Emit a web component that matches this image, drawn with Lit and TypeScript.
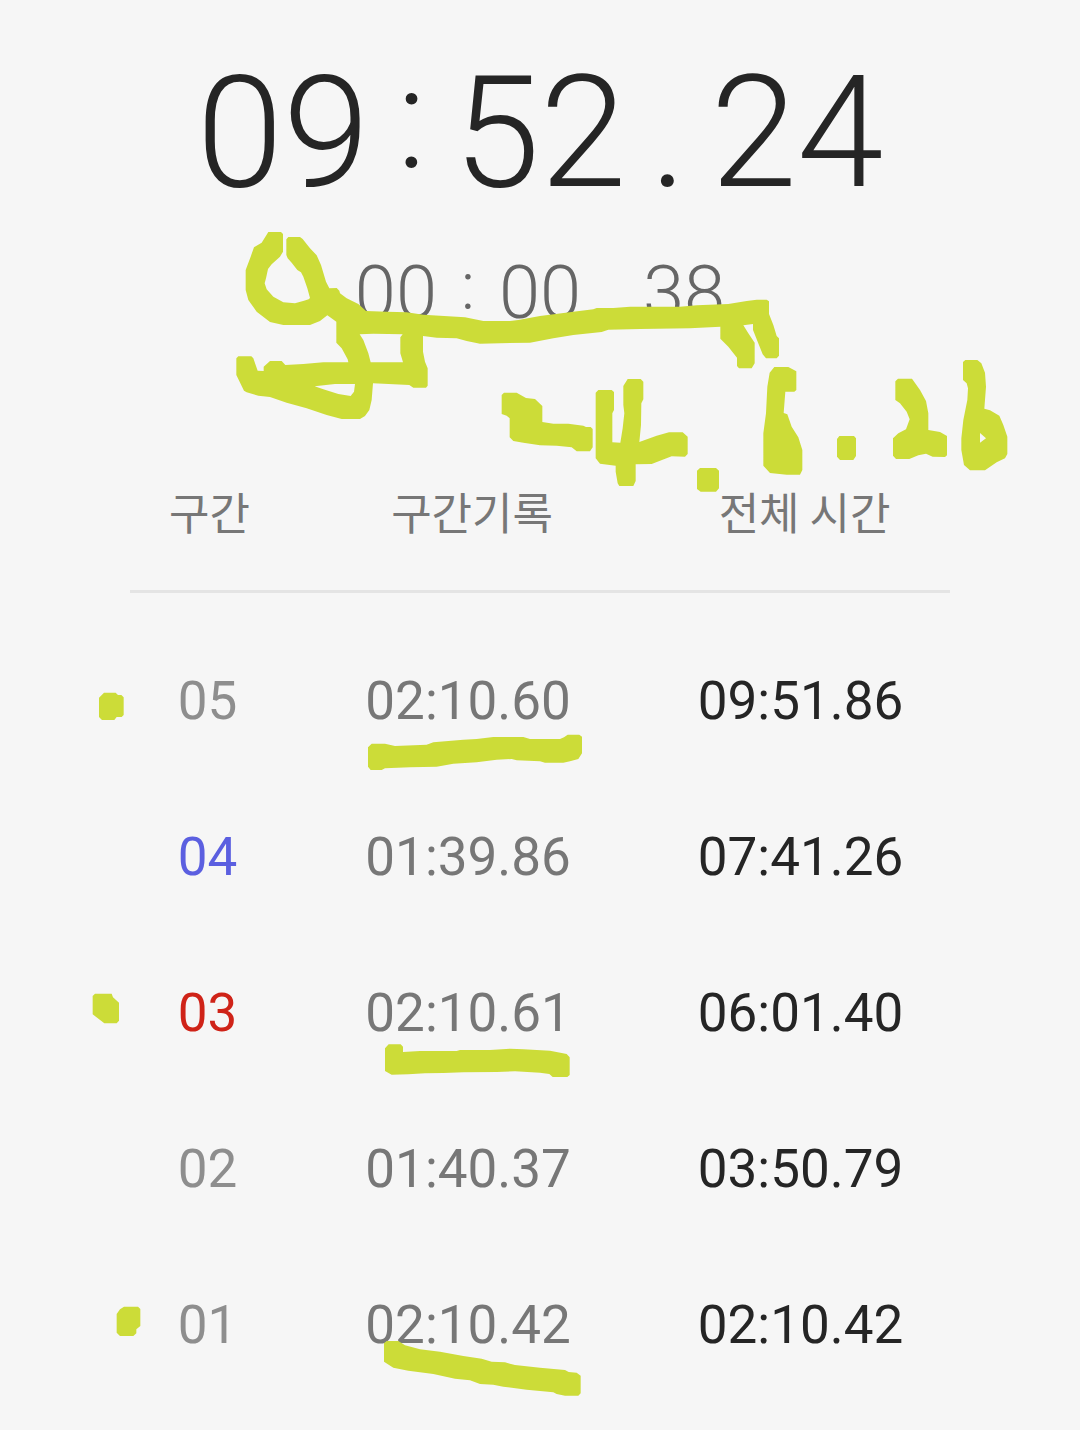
import { LitElement, html, svg, css } from "lit";
import { customElement } from "lit/decorators.js";

interface Lap {
  no: string;
  lap: string;
  total: string;
  tone: "" | "fastest" | "slowest";
}

interface Mark {
  x: number;
  y: number;
  d: string;
}

const LAPS: Lap[] = [
  { no: "05", lap: "02:10.60", total: "09:51.86", tone: "" },
  { no: "04", lap: "01:39.86", total: "07:41.26", tone: "fastest" },
  { no: "03", lap: "02:10.61", total: "06:01.40", tone: "slowest" },
  { no: "02", lap: "01:40.37", total: "03:50.79", tone: "" },
  { no: "01", lap: "02:10.42", total: "02:10.42", tone: "" },
];

// Highlighter strokes. Each outline is drawn at three times its final size from its own origin.
const MARKS: Mark[] = [
  {
    x: 220,
    y: 220,
    d: `M145 36 183 36 189 42 189 95 180 110 155 133 144 147 138 175 134 190 140 208 160 230 190 247 225 250 252 242
      266 238 270 234 262 205 250 170 243 157 232 150 215 128 203 115 199 105 199 58 205 51 240 51 248 57 270 85 290 106
      303 135 318 185 328 205 350 204 358 212 360 220 380 235 415 252 438 273 500 275 560 277 610 284 735 292 790 303
      870 303 895 300 960 288 1060 275 1120 268 1130 264 1180 264 1230 260 1380 260 1430 256 1525 252 1580 243 1610 239
      1640 239 1647 244 1647 282 1660 315 1670 348 1677 355 1677 407 1670 415 1638 415 1628 403 1613 365 1599 330
      1599 312 1570 316 1585 340 1604 368 1604 430 1595 445 1557 445 1551 438 1551 413 1525 380 1501 356 1501 320
      1410 325 1260 327 1165 329 1145 336 1060 345 1000 355 930 368 780 371 740 363 710 355 650 353 609 348 609 395
      615 425 623 445 623 497 618 503 580 503 568 495 459 490 455 540 448 570 435 588 420 597 365 597 320 585 260 565
      200 548 150 531 115 527 80 517 72 512 49 465 49 415 55 409 94 409 100 415 113 452 131 453 131 440 150 423 185 423
      196 435 250 432 310 427 385 427 383 418 365 385 349 368 349 305 322 286 300 303 270 315 190 315 150 306 110 275
      85 240 77 210 77 150 92 110 102 82 125 68Z
      M419 343 460 341 548 343 541 352 541 400 549 427 452 427 445 400 430 360Z
      M284 499 345 492 405 492 402 515 392 528 355 522 310 508Z`,
  },
  {
    x: 480,
    y: 350,
    d: `M72 128 110 128 138 144 165 147 187 168 187 216 220 221 265 221 310 227 318 231 332 231 338 237 338 292 330 304
      290 304 275 292 230 287 180 286 130 278 100 273 89 262 89 205 80 197 65 192 65 135Z
      M355 120 395 120 402 126 402 180 397 190 397 277 421 278 428 235 433 190 430 165 430 108 443 87 482 87 490 95
      490 148 484 160 483 225 478 276 530 257 567 247 608 247 623 260 623 312 615 320 575 319 515 342 467 343 467 393
      460 408 418 408 413 400 407 365 407 347 360 341 347 325 347 128Z
      M660 354 708 354 717 362 717 415 708 425 662 425 651 417 651 362Z`,
  },
  {
    x: 740,
    y: 350,
    d: `M103 51 145 51 169 64 169 120 163 125 136 125 131 189 142 193 155 230 175 262 187 300 187 360 180 374 140 374
      90 369 70 347 70 250 78 190 82 110 89 68Z
      M298 258 342 258 348 265 348 318 340 330 300 330 291 320 291 267Z
      M474 86 516 86 540 120 558 153 565 190 565 240 600 246 621 258 621 316 615 321 578 320 558 311 535 316 508 327
      468 327 459 317 459 265 475 250 498 238 509 208 500 185 480 160 466 150 466 94Z
      M676 30 712 30 724 40 735 68 738 110 733 176 750 181 778 197 790 225 802 260 802 312 795 325 770 337 735 361
      690 361 672 345 664 300 664 265 670 210 682 150 684 115 680 100 669 90 669 36Z
      M720 249 738 265 720 278Z`,
  },
  {
    x: 80,
    y: 660,
    d: `M72 98 107 98 114 105 124 105 131 112 131 165 125 171 110 171 103 180 66 180 57 171 57 113Z
      M875 251 915 251 945 258 1040 254 1060 247 1150 239 1190 237 1240 231 1330 231 1350 237 1440 237 1452 232
      1463 224 1498 224 1506 230 1506 280 1495 297 1470 304 1450 308 1395 308 1380 304 1310 301 1295 297 1250 299
      1190 307 1120 311 1070 320 990 322 915 325 905 330 872 330 864 320 864 262Z`,
  },
  {
    x: 80,
    y: 980,
    d: `M45 41 95 41 99 52 117 68 117 122 110 130 73 130 38 103 38 48Z
      M926 193 962 193 969 200 969 216 1020 213 1130 213 1140 210 1230 210 1290 206 1330 208 1410 212 1445 219
      1460 222 1469 232 1469 285 1462 291 1418 291 1408 282 1380 278 1305 274 1250 276 1150 277 1090 279 1035 280
      985 283 935 284 915 273 915 205Z`,
  },
  {
    x: 80,
    y: 1290,
    d: `M132 50 174 50 181 57 181 108 169 118 169 130 160 138 120 138 110 128 110 72 120 58Z
      M920 153 955 153 975 166 1020 178 1080 185 1150 198 1205 206 1235 215 1275 217 1305 225 1380 233 1455 240
      1466 246 1490 248 1502 257 1502 310 1495 317 1455 317 1430 312 1420 307 1340 299 1270 290 1240 284 1200 282
      1170 271 1125 266 1060 252 985 242 940 233 912 215 912 160Z`,
  },
];

@customElement("app-root")
export class AppRoot extends LitElement {
  static styles = css`
    :host {
      display: block;
      position: relative;
      min-height: 100vh;
      box-sizing: border-box;
      padding-top: 41px;
      background: #f6f6f6;
      color: #252525;
      font-family: Roboto, "Noto Sans CJK KR", sans-serif;
    }
    .clock {
      display: flex;
      justify-content: center;
      align-items: flex-start;
      font-weight: 300;
    }
    .total {
      font-size: 156px;
      line-height: 184px;
    }
    .current {
      margin-top: 24px;
      font-size: 74px;
      line-height: 88px;
      color: #666;
    }
    .sep {
      text-align: center;
    }
    .total .sep {
      width: 84px;
    }
    .current .sep {
      width: 62px;
    }
    .colon {
      font-weight: 350;
    }
    .total .colon {
      font-size: 141px;
      line-height: 156px;
    }
    .current .colon {
      font-size: 66px;
      line-height: 76px;
    }
    .laps {
      width: 76%;
      margin: 141px auto 0;
      border-collapse: collapse;
      table-layout: fixed;
      font-size: 53px;
      line-height: 64px;
    }
    .laps th,
    .laps td {
      padding: 0;
      text-align: center;
      font-weight: 400;
    }
    .laps td {
      padding-left: 4px;
    }
    .c-no {
      width: 19%;
    }
    .c-lap {
      width: 44%;
    }
    .laps thead th {
      padding: 0 0 46px 4px;
      border-bottom: 3px solid #e4e4e4;
      font-family: "Noto Sans CJK KR", sans-serif;
      font-size: 44px;
      line-height: 66px;
      color: #777;
    }
    .laps thead .wide {
      padding-left: 12px;
    }
    .laps tbody th,
    .laps tbody td {
      box-sizing: border-box;
      height: 156px;
    }
    .laps tbody tr:first-child > * {
      padding-top: 31px;
      height: 187px;
    }
    .no {
      color: #8e8e8e;
    }
    .no.fastest {
      color: #5b5fe0;
    }
    .no.slowest {
      color: #cf2318;
    }
    .lap {
      color: #777;
    }
    .marks {
      position: absolute;
      top: 0;
      left: 0;
      width: 100%;
      pointer-events: none;
      fill: #ccdc38;
    }
  `;

  private clock(kind: string, m: string, s: string, c: string) {
    return html`<div class="clock ${kind}" role="timer">
      <span>${m}</span><span class="sep colon">:</span><span>${s}</span><span class="sep">.</span><span>${c}</span>
    </div>`;
  }

  render() {
    return html`
      <main>
        ${this.clock("total", "09", "52", "24")} ${this.clock("current", "00", "00", "38")}
        <table class="laps">
          <colgroup>
            <col class="c-no" />
            <col class="c-lap" />
            <col />
          </colgroup>
          <thead>
            <tr>
              <th scope="col">구간</th>
              <th scope="col" class="wide">구간기록</th>
              <th scope="col" class="wide">전체 시간</th>
            </tr>
          </thead>
          <tbody>
            ${LAPS.map(
              (l) => html`<tr>
                <th scope="row" class="no ${l.tone}">${l.no}</th>
                <td class="lap">${l.lap}</td>
                <td>${l.total}</td>
              </tr>`
            )}
          </tbody>
        </table>
      </main>
      <svg class="marks" viewBox="0 0 1080 1430" aria-hidden="true">
        ${MARKS.map(
          (m) => svg`<path fill-rule="evenodd" transform="translate(${m.x} ${m.y}) scale(${1 / 3})" d=${m.d} />`
        )}
      </svg>
    `;
  }
}
